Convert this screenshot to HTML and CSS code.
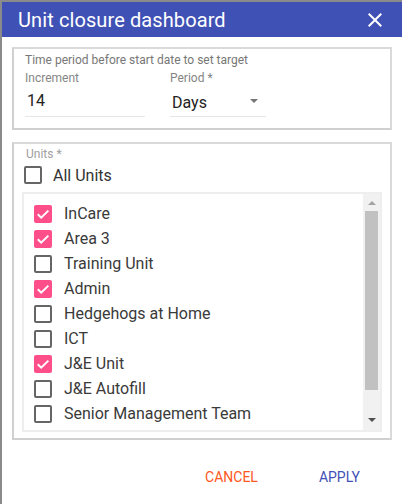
FILE: index.html
```html
<!DOCTYPE html>
<html>
<head>
<meta charset="utf-8">
<link rel="stylesheet" href="styles.css">
</head>
<body>
<div class="dialog">
  <div class="header">
    <div class="title">Unit closure dashboard</div>
    <svg class="close" width="24" height="24" viewBox="0 0 24 24"><path d="M19 6.41L17.59 5 12 10.59 6.41 5 5 6.41 10.59 12 5 17.59 6.41 19 12 13.41 17.59 19 19 17.59 13.41 12z" fill="#fff"/></svg>
  </div>
  <div class="content">
    <div class="box period-box">
      <div class="box-label">Time period before start date to set target</div>
      <div class="fields">
        <div class="field inc">
          <div class="field-label">Increment</div>
          <div class="field-value">14</div>
        </div>
        <div class="field per">
          <div class="field-label">Period *</div>
          <div class="field-value select"><span>Days</span><span class="arrow"></span></div>
        </div>
      </div>
    </div>
    <div class="box units-box">
      <div class="box-label units-label">Units *</div>
      <div class="all-row">
        <span class="cb"></span><span class="all-text">All Units</span>
      </div>
      <div class="list">
        <div class="items">
          <div class="item"><span class="cb on"><svg viewBox="0 0 18 18"><path d="M3.8 9.2l3.4 3.4L14.4 5.6" fill="none" stroke="#fff" stroke-width="2"/></svg></span><span>InCare</span></div>
          <div class="item"><span class="cb on"><svg viewBox="0 0 18 18"><path d="M3.8 9.2l3.4 3.4L14.4 5.6" fill="none" stroke="#fff" stroke-width="2"/></svg></span><span>Area 3</span></div>
          <div class="item"><span class="cb"></span><span>Training Unit</span></div>
          <div class="item"><span class="cb on"><svg viewBox="0 0 18 18"><path d="M3.8 9.2l3.4 3.4L14.4 5.6" fill="none" stroke="#fff" stroke-width="2"/></svg></span><span>Admin</span></div>
          <div class="item"><span class="cb"></span><span>Hedgehogs at Home</span></div>
          <div class="item"><span class="cb"></span><span>ICT</span></div>
          <div class="item"><span class="cb on"><svg viewBox="0 0 18 18"><path d="M3.8 9.2l3.4 3.4L14.4 5.6" fill="none" stroke="#fff" stroke-width="2"/></svg></span><span>J&amp;E Unit</span></div>
          <div class="item"><span class="cb"></span><span>J&amp;E Autofill</span></div>
          <div class="item"><span class="cb"></span><span>Senior Management Team</span></div>
          <div class="item"><span class="cb"></span></div>
        </div>
        <div class="scrollbar">
          <span class="sb-up"></span>
          <span class="sb-thumb"></span>
          <span class="sb-down"></span>
        </div>
      </div>
    </div>
  </div>
  <div class="actions">
    <span class="btn cancel">CANCEL</span>
    <span class="btn apply">APPLY</span>
  </div>
</div>
</body>
</html>
```
FILE: styles.css
```css
html, body {
  margin: 0;
  padding: 0;
  background: #fff;
}
body {
  font-family: Roboto, "Liberation Sans", sans-serif;
  width: 402px;
  height: 504px;
  overflow: hidden;
}
.dialog {
  box-sizing: border-box;
  width: 402px;
  height: 504px;
  border-top: 2px solid #8a8a8a;
  border-left: 2px solid #8a8a8a;
  display: flex;
  flex-direction: column;
}
.header {
  height: 35px;
  background: #3f51b5;
  display: flex;
  align-items: center;
  padding-left: 16px;
  padding-right: 15px;
}
.title {
  flex: 1;
  color: #fff;
  font-size: 20px;
  line-height: 24px;
  padding-top: 1px;
  letter-spacing: 0.1px;
}
.close {
  display: block;
  margin-top: 1px;
}
.content {
  padding: 10px 8px 0 10px;
  display: flex;
  flex-direction: column;
  gap: 12px;
}
.box {
  border: 2px solid #dadada;
  border-left-color: #d0d0d0;
  border-bottom-color: #d0d0d0;
  box-sizing: border-box;
  width: 380px;
}
.period-box {
  height: 83px;
  padding: 4px 0 0 11px;
}
.box-label {
  font-size: 12px;
  line-height: 14px;
  color: #777;
}
.fields {
  display: flex;
  gap: 25px;
  margin-top: 4px;
}
.field-label {
  font-size: 12px;
  line-height: 14px;
  color: #858585;
}
.field-value {
  font-size: 16px;
  line-height: 20px;
  color: #222;
  padding: 6px 0 5px 2px;
  border-bottom: 1px solid #e6e6e6;
}
.inc { width: 120px; }
.per { width: 96px; }
.select {
  display: flex;
  align-items: center;
  justify-content: space-between;
  padding-top: 8px;
  padding-bottom: 3px;
  padding-right: 8px;
}
.arrow {
  width: 0;
  height: 0;
  border-left: 4px solid transparent;
  border-right: 4px solid transparent;
  border-top: 4px solid #757575;
  margin-top: -4px;
}
.units-box {
  height: 298px;
  padding: 3px 8px 0 8px;
}
.units-label {
  color: #9e9e9e;
  padding-left: 4px;
}
.all-row {
  display: flex;
  align-items: center;
  height: 24px;
  margin-top: 2px;
  padding-left: 2px;
}
.all-text {
  font-size: 16px;
  color: #333;
  margin-left: 11px;
}
.cb {
  box-sizing: border-box;
  width: 18px;
  height: 18px;
  border: 2px solid #666;
  border-radius: 2px;
  flex: none;
  display: flex;
}
.cb.on {
  background: #ff4f8b;
  border-color: #ff4f8b;
}
.cb.on svg {
  width: 18px;
  height: 18px;
  margin: -2px;
}
.list {
  margin-top: 5px;
  height: 240px;
  box-sizing: border-box;
  border: 2px solid #eee;
  display: flex;
}
.items {
  flex: 1;
  overflow: hidden;
  padding: 7px 0 0 10px;
}
.item {
  height: 25px;
  display: flex;
  align-items: center;
  font-size: 16px;
  color: #3a3a3a;
  gap: 12px;
}
.scrollbar {
  width: 17px;
  background: #f1f1f1;
  display: flex;
  flex-direction: column;
  align-items: center;
}
.sb-up, .sb-down {
  width: 0;
  height: 0;
  border-left: 4px solid transparent;
  border-right: 4px solid transparent;
}
.sb-up {
  border-bottom: 4px solid #a3a3a3;
  margin-top: 7px;
}
.sb-thumb {
  width: 13px;
  height: 179px;
  background: #c1c1c1;
  margin-top: 6px;
}
.sb-down {
  border-top: 4px solid #505050;
  margin-top: 28px;
}
.actions {
  display: flex;
  justify-content: flex-end;
  padding-top: 27px;
  padding-right: 26px;
}
.btn {
  font-size: 14px;
  line-height: 20px;
  padding: 0 16px;
}
.cancel { color: #ff5722; margin-right: 29px; }
.apply { color: #3f51b5; }
```
